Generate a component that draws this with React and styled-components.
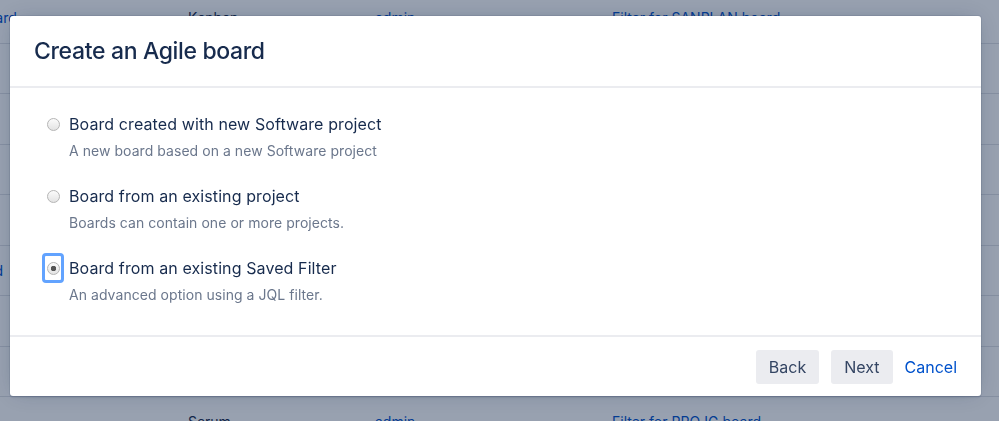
import React from "react";
import styled, { createGlobalStyle } from "styled-components";

const GlobalStyle = createGlobalStyle`
  html, body {
    margin: 0;
    padding: 0;
    background: #fff;
    overflow: hidden;
  }
  body {
    font-family: Inter, "Liberation Sans", Arial, sans-serif;
    color: #172b4d;
    -webkit-font-smoothing: antialiased;
  }
`;

const boards = [
  { name: "SANPLAN board", type: "Kanban", owner: "admin", filter: "Filter for SANPLAN board" },
  { name: "DEV", type: "Scrum", owner: "admin", filter: "Filter for DEV board" },
  { name: "OPS", type: "Kanban", owner: "admin", filter: "Filter for OPS board" },
  { name: "WEB", type: "Scrum", owner: "admin", filter: "Filter for WEB board" },
  { name: "APP", type: "Kanban", owner: "admin", filter: "Filter for APP board" },
  { name: "MOBILE board", type: "Scrum", owner: "admin", filter: "Filter for MOBILE board" },
  { name: "QA", type: "Kanban", owner: "admin", filter: "Filter for QA board" },
  { name: "HR", type: "Scrum", owner: "admin", filter: "Filter for HR board" },
  { name: "PROJG board", type: "Scrum", owner: "admin", filter: "Filter for PROJG board" },
];

const options = [
  {
    id: "software",
    label: "Board created with new Software project",
    desc: "A new board based on a new Software project",
  },
  {
    id: "project",
    label: "Board from an existing project",
    desc: "Boards can contain one or more projects.",
  },
  {
    id: "filter",
    label: "Board from an existing Saved Filter",
    desc: "An advanced option using a JQL filter.",
  },
];

const App = () => {
  const selected = "filter";
  return (
    <>
      <GlobalStyle />
      <BoardTable>
        {boards.map((b) => (
          <BoardRow key={b.name + b.filter}>
            <Cell $link>{b.name}</Cell>
            <Cell>{b.type}</Cell>
            <Cell $link>{b.owner}</Cell>
            <Cell $link>{b.filter}</Cell>
          </BoardRow>
        ))}
      </BoardTable>

      <Blanket>
        <Dialog>
          <Header>
            <Title>Create an Agile board</Title>
          </Header>
          <Body>
            {options.map((o) => (
              <Option key={o.id}>
                <RadioWrap $focused={o.id === selected}>
                  <Radio $checked={o.id === selected} />
                </RadioWrap>
                <Label>{o.label}</Label>
                <Desc>{o.desc}</Desc>
              </Option>
            ))}
          </Body>
          <Footer>
            <Button>Back</Button>
            <Button>Next</Button>
            <LinkButton>Cancel</LinkButton>
          </Footer>
        </Dialog>
      </Blanket>
    </>
  );
};

const BoardTable = styled.div`
  margin: -7px 0 0 -92px;
  display: flex;
  flex-direction: column;
`;

const BoardRow = styled.div`
  display: grid;
  grid-template-columns: 280px 187px 237px 1fr;
  align-items: center;
  height: 49.5px;
  border-bottom: 1px solid #dfe1e6;
  font-size: 14px;
`;

const Cell = styled.div`
  color: ${(p) => (p.$link ? "#0052cc" : "#172b4d")};
  white-space: nowrap;
`;

const Blanket = styled.div`
  position: fixed;
  inset: 0;
  background: rgba(9, 30, 66, 0.42);
  padding: 16px 0 0 10px;
`;

const Dialog = styled.div`
  width: 971px;
  height: 380px;
  background: #fff;
  border-radius: 3px;
  box-shadow: 0 0 0 1px rgba(9, 30, 66, 0.08), 0 2px 1px rgba(9, 30, 66, 0.08),
    0 0 20px -6px rgba(9, 30, 66, 0.31);
  display: flex;
  flex-direction: column;
  overflow: hidden;
`;

const Header = styled.div`
  height: 70px;
  padding: 0 24px;
  display: flex;
  align-items: center;
  border-bottom: 2px solid #ebecf0;
`;

const Title = styled.h2`
  margin: 0;
  font-size: 23px;
  font-weight: 500;
  color: #172b4d;
  letter-spacing: -0.35px;
`;

const Body = styled.div`
  flex: 1;
  padding: 26px 32px 0;
  display: flex;
  flex-direction: column;
  gap: 25px;
`;

const Option = styled.div`
  display: grid;
  grid-template-columns: 22px 1fr;
  column-gap: 5px;
  row-gap: 7px;
  align-items: center;
`;

const RadioWrap = styled.span`
  box-sizing: border-box;
  width: 22px;
  height: 30px;
  margin: -5px 0;
  display: flex;
  align-items: center;
  justify-content: center;
  border-radius: 4px;
  border: 3px solid ${(p) => (p.$focused ? "#62a3ff" : "transparent")};
`;

const Radio = styled.span`
  box-sizing: border-box;
  width: 13px;
  height: 13px;
  border-radius: 50%;
  border: 1px solid #b5b5b5;
  background: ${(p) =>
    p.$checked
      ? "radial-gradient(circle, #555 0 2.5px, transparent 3px), linear-gradient(#fbfbfb, #e3e3e3)"
      : "linear-gradient(#fbfbfb, #e3e3e3)"};
`;

const Label = styled.div`
  font-size: 16px;
  line-height: 20px;
  letter-spacing: 0.1px;
  color: #172b4d;
`;

const Desc = styled.div`
  grid-column: 2;
  font-size: 14px;
  line-height: 20px;
  letter-spacing: 0.05px;
  color: #6b778c;
`;

const Footer = styled.div`
  height: 59px;
  border-top: 2px solid #ebecf0;
  padding: 0 24px;
  display: flex;
  align-items: center;
  justify-content: flex-end;
  gap: 12px;
`;

const Button = styled.button`
  height: 34px;
  padding: 0 13px;
  border: 0;
  border-radius: 3px;
  background: #ebecf0;
  color: #344563;
  font-family: inherit;
  font-size: 16px;
  cursor: pointer;
`;

const LinkButton = styled.button`
  height: 34px;
  padding: 0;
  border: 0;
  background: none;
  color: #0052cc;
  font-family: inherit;
  font-size: 16px;
  cursor: pointer;
`;

export default App;
